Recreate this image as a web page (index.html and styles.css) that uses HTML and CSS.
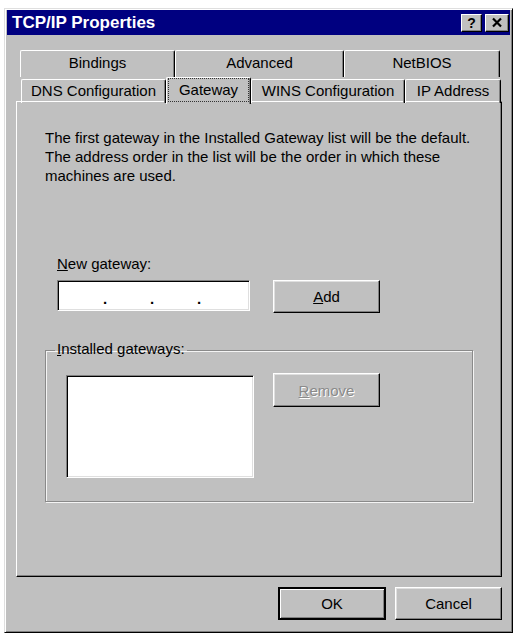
FILE: index.html
```html
<!DOCTYPE html>
<html lang="en">
<head>
  <meta charset="UTF-8" />
  <meta name="viewport" content="width=device-width, initial-scale=1" />
  <title>TCP/IP Properties</title>
  <link rel="stylesheet" href="styles.css">
</head>
<body>

  <div class="window">
    <div class="titlebar">
      <span class="title">TCP/IP Properties</span>
      <div class="title-btns">
        <span class="tbtn help">?</span>
        <span class="tbtn close">
          <svg width="12" height="11" viewBox="0 0 12 11">
            <path d="M2 1.5 L10 9.5 M10 1.5 L2 9.5" stroke="#000" stroke-width="2.2" fill="none" />
          </svg>
        </span>
      </div>
    </div>

    <div class="content">
      <div class="tabs">
        <div class="tab-row back">
          <div class="tab">Bindings</div>
          <div class="tab">Advanced</div>
          <div class="tab">NetBIOS</div>
        </div>
        <div class="tab-row front">
          <div class="tab">DNS Configuration</div>
          <div class="tab active"><span class="focus">Gateway</span></div>
          <div class="tab">WINS Configuration</div>
          <div class="tab">IP Address</div>
        </div>
      </div>

      <div class="panel">
        <p class="desc">
          The first gateway in the Installed Gateway list will be the default.<br>
          The address order in the list will be the order in which these<br>
          machines are used.
        </p>

        <div class="new-gw">
          <label class="caption"><u>N</u>ew gateway:</label>
          <div class="row">
            <div class="ip-input">
              <span class="seg"></span><span class="dot">.</span>
              <span class="seg"></span><span class="dot">.</span>
              <span class="seg"></span><span class="dot">.</span>
              <span class="seg"></span>
            </div>
            <button class="btn add"><u>A</u>dd</button>
          </div>
        </div>

        <fieldset class="group">
          <legend><u>I</u>nstalled gateways:</legend>
          <div class="row">
            <div class="listbox"></div>
            <button class="btn remove" disabled><u>R</u>emove</button>
          </div>
        </fieldset>
      </div>

      <div class="footer">
        <button class="btn default">OK</button>
        <button class="btn">Cancel</button>
      </div>
    </div>
  </div>

</body>
</html>
```

FILE: styles.css
```css
body {
  margin: 0;
  padding: 8px 4px 0 4px;
  background: #ffffff;
  font-family: 'Liberation Sans', Arial, sans-serif;
  font-size: 15px;
  color: #000;
}
.window {
  box-sizing: border-box;
  width: 509px;
  height: 625px;
  background: #c0c0c0;
  border: 1px solid;
  border-color: #dfdfdf #000 #000 #dfdfdf;
  box-shadow: inset 1px 1px #fff, inset -1px -1px #808080;
  padding: 1px 2px;
}
.titlebar {
  height: 25px;
  background: #000080;
  display: flex;
  align-items: center;
  justify-content: space-between;
  padding-left: 5px;
}
.title {
  color: #fff;
  font-weight: bold;
  font-size: 17px;
  line-height: 25px;
}
.title-btns {
  display: flex;
  gap: 3px;
  margin-right: 1px;
}
.tbtn {
  box-sizing: border-box;
  height: 18px;
  width: 22px;
  background: #c0c0c0;
  border: 1px solid;
  border-color: #fff #000 #000 #fff;
  box-shadow: inset -1px -1px #808080;
  display: flex;
  align-items: center;
  justify-content: center;
}
.tbtn.help {
  width: 21px;
  font-weight: bold;
  font-size: 14px;
  line-height: 16px;
}
.tbtn.close {
  width: 24px;
}
.content {
  padding: 15px 8px 0 9px;
}
.tabs {
  margin: 0 2px 0 4px;
}
.tab-row {
  display: grid;
}
.tab-row.back {
  grid-template-columns: 155px 169px 156px;
  height: 27px;
}
.tab-row.front {
  grid-template-columns: 145px 85px 154px 96px;
  height: 24px;
  align-items: end;
  margin-left: 1px;
}
.tab {
  box-sizing: border-box;
  text-align: center;
  border-top: 1px solid #fff;
  border-left: 1px solid #fff;
  border-right: 1px solid #000;
  box-shadow: inset -1px 0 #808080;
  border-radius: 2px 2px 0 0;
  white-space: nowrap;
}
.back .tab {
  height: 27px;
  line-height: 24px;
  padding-bottom: 2px;
}
.front .tab {
  height: 24px;
  line-height: 22px;
  padding-bottom: 1px;
}
.front .tab.active {
  position: relative;
  z-index: 1;
  height: 27px;
  margin-bottom: -1px;
  background: #c0c0c0;
  line-height: 22px;
  padding: 1px 2px 3px;
}
.focus {
  display: block;
  outline: 1px dotted #333;
  outline-offset: 0;
  height: 22px;
}
.panel {
  box-sizing: border-box;
  height: 476px;
  border: 1px solid;
  border-color: #fff #000 #000 #fff;
  box-shadow: inset -1px -1px #808080;
  padding: 26px 0 0 28px;
}
.desc {
  margin: 0;
  line-height: 19px;
}
.new-gw {
  margin-top: 69px;
  padding-left: 12px;
}
.caption {
  display: block;
  line-height: 19px;
}
.row {
  display: flex;
  align-items: flex-start;
}
.new-gw .row {
  margin-top: 7px;
}
.ip-input {
  box-sizing: border-box;
  width: 193px;
  height: 31px;
  background: #fff;
  border: 1px solid;
  border-color: #808080 #fff #fff #808080;
  box-shadow: inset 1px 1px #000, inset -1px -1px #dfdfdf;
  display: flex;
  align-items: flex-end;
  padding: 0 0 4px 2px;
}
.seg {
  width: 43px;
}
.dot {
  font-weight: bold;
  line-height: 15px;
  width: 4px;
}
.btn {
  box-sizing: border-box;
  width: 107px;
  height: 33px;
  background: #c0c0c0;
  font-family: inherit;
  font-size: 15px;
  color: #000;
  border: 1px solid;
  border-color: #fff #000 #000 #fff;
  box-shadow: inset -1px -1px #808080, inset 1px 1px #dfdfdf;
  padding: 0;
}
.btn.add {
  margin-left: 23px;
}
.group {
  margin: 26px 0 0 0;
  width: 428px;
  box-sizing: border-box;
  border: 1px solid #8a8a8a;
  box-shadow: inset 1px 1px #f4f4f4, 1px 1px #f4f4f4;
  padding: 13px 0 23px 20px;
}
.group legend {
  margin-left: -11px;
  padding: 0 2px 4px;
  line-height: 19px;
}
.listbox {
  box-sizing: border-box;
  width: 188px;
  height: 103px;
  background: #fff;
  border: 1px solid;
  border-color: #808080 #fff #fff #808080;
  box-shadow: inset 1px 1px #000, inset -1px -1px #dfdfdf;
}
.btn.remove {
  margin-left: 19px;
  margin-top: -2px;
  height: 34px;
  color: #8a8a8a;
  text-shadow: 1px 1px #fff;
}
.footer {
  display: flex;
  justify-content: flex-end;
  gap: 9px;
  margin-top: 10px;
}
.btn.default {
  width: 108px;
  border: 2px solid #000;
  box-shadow: inset 1px 1px #fff, inset -1px -1px #808080;
}
```
